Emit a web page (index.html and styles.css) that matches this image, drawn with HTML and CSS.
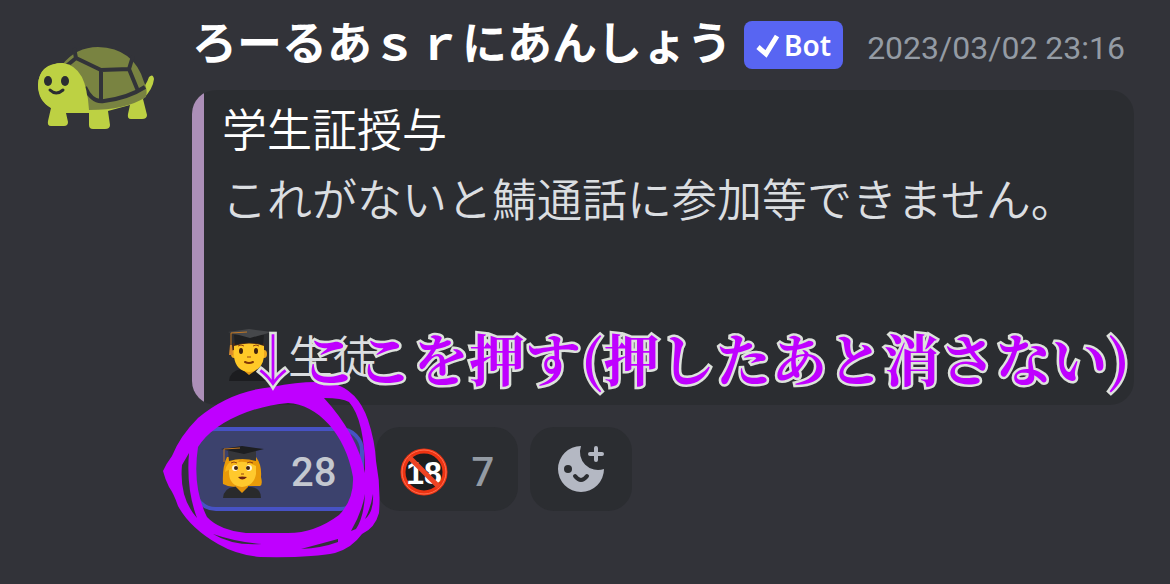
FILE: index.html
```html
<!DOCTYPE html>
<html lang="ja">
<head>
    <meta charset="utf-8">
    <title>ろーるあｓｒにあんしょう</title>
    <link rel="stylesheet" href="styles.css">
</head>
<body>

    <article class="message">

        <!--Turtle avatar-->
        <svg class="avatar" viewBox="0 0 120 86" aria-hidden="true">
            <path fill="#bdd143" d="M104 45 Q110 40 113 31 Q117 27 118 33 Q117 43 107 53 L111 69 Q111 73 106 73 L95 73 Q91 73 92 68 L94 59 L72 65 L74 79 Q74 83 69 83 L57 83 Q53 83 53 79 L53 67 L30 67 L32 76 Q32 80 28 80 L15 80 Q11 80 12 75 L15 62 Q2 55 2 39 Q3 18 27 17 L45 26 L55 60 Z"/>
            <path fill="#798341" d="M26 19 Q40 1 62 1 Q98 2 108 36 Q112 44 110 51 Q90 64 53 64 Q52 43 44 31 Q37 20 26 19 Z"/>
            <path fill="none" stroke="#323339" stroke-width="4" d="M38 2 L40 12 L28 22 M40 12 L65 24 L93 23 L97 10 M65 24 L65 55 M93 23 L102 45 M49 41 Q56 57 68 55 Q92 52 109 41"/>
            <path fill="#bdd143" d="M2 39 Q3 17 27 17 Q52 21 52 64 L30 67 Q3 62 2 39 Z"/>
            <ellipse cx="12" cy="35" rx="4" ry="5" fill="#2b2d31"/>
            <ellipse cx="29" cy="35" rx="4" ry="5" fill="#2b2d31"/>
            <path fill="none" stroke="#2b2d31" stroke-width="3" stroke-linecap="round" d="M14 44 Q20 50 27 44"/>
        </svg>

        <div class="content">
            <header class="header">
                <h1 class="username">ろーるあｓｒにあんしょう</h1>
                <span class="bot_tag">
                    <svg class="check" viewBox="0 0 26 26" aria-hidden="true"><path d="M2 15 L10 22 L21 4"/></svg>
                    Bot
                </span>
                <time class="timestamp" datetime="2023-03-02T23:16">2023/03/02 23:16</time>
            </header>

            <section class="embed">
                <h2 class="embed_title">学生証授与</h2>
                <p class="embed_text">これがないと鯖通話に参加等できません。</p>
                <p class="embed_role">
                    <svg class="student" viewBox="0 0 48 52" aria-hidden="true">
                        <path fill="#1c1d20" d="M1 52 Q2 42 13 40 L31 40 Q41 42 42 52 Z"/>
                        <path fill="#e69b16" d="M15 35 L28 35 L28 41 L21 46 L15 41 Z"/>
                        <path fill="#4b2a18" d="M5 14 H36 L37 25 H4 Z"/>
                        <ellipse cx="6" cy="25" rx="3" ry="4" fill="#eeaa1f"/>
                        <ellipse cx="36" cy="25" rx="3" ry="4" fill="#eeaa1f"/>
                        <path fill="#ffc928" d="M6 17 Q21 12 36 17 V28 Q34 42 21 43 Q8 42 6 28 Z"/>
                        <ellipse cx="13" cy="22" rx="2" ry="3" fill="#40220f"/>
                        <ellipse cx="28" cy="22" rx="2" ry="3" fill="#40220f"/>
                        <path fill="none" stroke="#97460e" stroke-width="1" d="M10 17 Q13 15 16 17 M25 17 Q28 15 31 17 M19 28 H23"/>
                        <path fill="none" stroke="#803707" stroke-width="2" stroke-linecap="round" d="M17 33 Q21 35 25 33"/>
                        <path fill="#1f2022" d="M6 6 H36 L35 16 Q21 11 7 16 Z"/>
                        <path fill="#46484b" d="M0 3 L21 0 L44 3 L22 9 Z"/>
                        <path fill="none" stroke="#c27825" stroke-width="1" d="M19 3 L3 4 V17"/>
                        <path fill="#d98a2b" d="M2 16 H4 L5 26 H1 Z"/>
                    </svg>
                    生徒
                </p>
            </section>

            <div class="reactions">
                <button class="reaction reaction_mine" type="button" aria-label="28">
                    <svg class="emoji" viewBox="0 0 48 52" aria-hidden="true">
                        <path fill="#e99a09" d="M7 11 Q2 21 3 38 Q10 42 19 40 H40 Q43 39 41 31 Q42 19 36 11 Z"/>
                        <path fill="#292a2c" d="M3 52 Q4 42 14 41 L31 41 Q41 42 41 52 Z"/>
                        <path fill="#e3930c" d="M16 34 H28 V41 L22 47 L16 41 Z"/>
                        <path fill="#ffc92d" d="M9 19 Q22 12 36 20 V28 Q34 40 22 41 Q10 40 9 28 Z"/>
                        <path fill="#f9b51a" d="M5 26 Q6 14 20 13 Q16 21 5 26 Z"/>
                        <circle cx="15" cy="22" r="3" fill="#fff4d8"/>
                        <circle cx="29" cy="22" r="3" fill="#fff4d8"/>
                        <circle cx="16" cy="22" r="2" fill="#40220f"/>
                        <circle cx="28" cy="22" r="2" fill="#40220f"/>
                        <path fill="none" stroke="#97460e" stroke-width="1" d="M11 17 Q14 15 17 17 M27 17 Q30 15 33 17 M21 28 H24"/>
                        <path fill="#6b2312" d="M18 31 Q22 30 27 31 Q22 36 18 31 Z"/>
                        <path fill="#35363a" d="M8 5 H36 V15 Q22 11 9 15 Z"/>
                        <path fill="#1d1e20" d="M1 3 L22 0 L44 3 L24 8 Z"/>
                        <path fill="none" stroke="#c27825" stroke-width="1" d="M20 2 L4 3 V16"/>
                    </svg>
                    28
                </button>
                <button class="reaction" type="button" aria-label="7">
                    <svg class="emoji" viewBox="0 0 48 48" aria-hidden="true">
                        <circle cx="24" cy="24" r="21" fill="#1d1d1e" stroke="#ee3312" stroke-width="5"/>
                        <circle cx="24" cy="24" r="22" fill="none" stroke="#ff7152" stroke-width="1"/>
                        <text class="age" x="24" y="36" text-anchor="middle">18</text>
                        <path d="M9 9 L39 39" stroke="#ee4323" stroke-width="5"/>
                    </svg>
                    7
                </button>
                <button class="reaction reaction_add" type="button" aria-label="+">
                    <svg class="add_icon" viewBox="0 0 48 48" aria-hidden="true">
                        <path fill="#b4b8c3" d="M24 1 A23 23 0 1 0 47 24 A18 18 0 0 1 24 1 Z"/>
                        <circle cx="11" cy="24" r="4" fill="#2b2d31"/>
                        <path fill="none" stroke="#2b2d31" stroke-width="4" stroke-linecap="round" d="M18 31 Q24 39 30 31"/>
                        <path fill="none" stroke="#b4b8c3" stroke-width="4" stroke-linecap="round" d="M39 3 V15 M33 9 H45"/>
                    </svg>
                </button>
            </div>

            <!--Handwritten note drawn over the message-->
            <svg class="circle_mark" viewBox="0 0 220 180" aria-hidden="true">
                <path fill="#bf00ff" fill-rule="evenodd" d="M1 92 Q4 85 10 77 Q18 57 36 39 Q68 12 110 8 Q145 1 170 4 Q196 11 206 41 Q213 62 214 82 Q219 108 217 134 Q213 149 200 155 Q190 169 173 174 Q150 179 98 178 Q75 176 56 165 Q28 149 16 127 Q12 115 7 108 Q3 100 1 92 Z
                    M36 68 Q50 46 85 33 Q105 26 126 24 C155 25 184 55 191 98 Q192 121 177 136 Q153 154 126 154 H84 Q57 151 45 138 Q30 108 36 68 Z
                    M20 86 L27 74 Q24 110 35 139 Q17 119 20 86 Z
                    M162 19 Q180 19 187 23 Q203 41 203 94 Q195 55 162 19 Z
                    M51 155 Q70 167 100 165 Q74 163 51 155 Z
                    M139 170 L176 160 L176 163 Q160 169 139 170 Z
                    M189 152 Q200 133 203 115 Q202 138 194 150 Z
                    M203 140 Q209 128 211 115 Q212 133 203 140 Z"/>
            </svg>
            <p class="note">↓ここを押す(押したあと消さない)</p>
        </div>

    </article>

</body>
</html>
```
FILE: styles.css
```css
* {
    box-sizing: border-box;
}

body {
    margin: 0;
    background-color: #323339;
    font-family: "Noto Sans CJK JP", sans-serif;
}

h1, h2, p {
    margin: 0;
}

/*Message layout.*/
.message {
    display: flex;
    gap: 36px;
    min-height: 100vh;
    padding: 16px 36px 0 36px;
}

.avatar {
    flex: none;
    width: 120px;
    height: 86px;
    margin-top: 30px;
}

.content {
    position: relative;
    flex: 1;
    min-width: 0;
}

.header {
    display: flex;
    align-items: center;
    height: 58px;
    white-space: nowrap;
}

.username {
    padding-bottom: 8px;
    color: #ffffff;
    font-size: 45px;
    font-weight: 700;
    line-height: 56px;
}

.bot_tag {
    display: flex;
    align-items: center;
    gap: 2px;
    height: 48px;
    margin-left: 12px;
    padding: 0 12px;
    border-radius: 8px;
    background-color: #5865f2;
    color: #ffffff;
    font-family: "Noto Sans", sans-serif;
    font-size: 28px;
    font-weight: 600;
}

.check {
    width: 26px;
    height: 26px;
    fill: none;
    stroke: #ffffff;
    stroke-width: 5;
}

.timestamp {
    padding-top: 6px;
    margin-left: 24px;
    color: #949ba4;
    font-family: Roboto, sans-serif;
    font-size: 32px;
}

/*Embed card.*/
.embed {
    margin-top: 16px;
    padding: 10px 20px 24px 30px;
    border-radius: 24px;
    background: linear-gradient(to right, #ac8fb8 12px, #2b2d31 12px);
    color: #dbdee1;
    font-size: 45px;
    font-weight: 350;
    line-height: 52px;
}

.embed_title {
    color: #ffffff;
    font-size: 45px;
    font-weight: 350;
    line-height: 56px;
}

.embed_text {
    margin-top: 16px;
}

.embed_role {
    display: flex;
    align-items: center;
    gap: 12px;
    margin-top: 105px;
    padding-left: 6px;
}

.student {
    width: 48px;
    height: 52px;
}

/*Reaction buttons.*/
.reactions {
    display: flex;
    gap: 12px;
    margin-top: 22px;
}

.reaction {
    display: flex;
    align-items: center;
    gap: 23px;
    height: 84px;
    padding: 6px 24px 0 24px;
    border: 0;
    border-radius: 24px;
    background-color: #2b2d31;
    color: #949ba4;
    font-family: Roboto, sans-serif;
    font-size: 40px;
    font-weight: 500;
}

.reaction_mine {
    border: 4px solid #4752c4;
    background-color: #3c426d;
    color: #c4c8d0;
}

.reaction_add {
    padding: 0 24px;
}

.emoji {
    width: 48px;
    height: 52px;
}

.age {
    fill: #ffffff;
    font-family: "Liberation Sans", sans-serif;
    font-size: 32px;
    font-weight: 700;
}

.add_icon {
    width: 54px;
    height: 48px;
}

/*Note over the message.*/
.circle_mark {
    position: absolute;
    top: 363px;
    left: -30px;
    width: 220px;
    height: 180px;
}

.note {
    position: absolute;
    top: 305px;
    left: 53px;
    color: #bf00ff;
    font-family: "Noto Serif CJK JP", "Noto Sans CJK JP", serif;
    font-size: 56px;
    font-weight: 700;
    line-height: 72px;
    white-space: nowrap;
    -webkit-text-stroke: 5px #dde2dc;
    paint-order: stroke fill;
}
```
